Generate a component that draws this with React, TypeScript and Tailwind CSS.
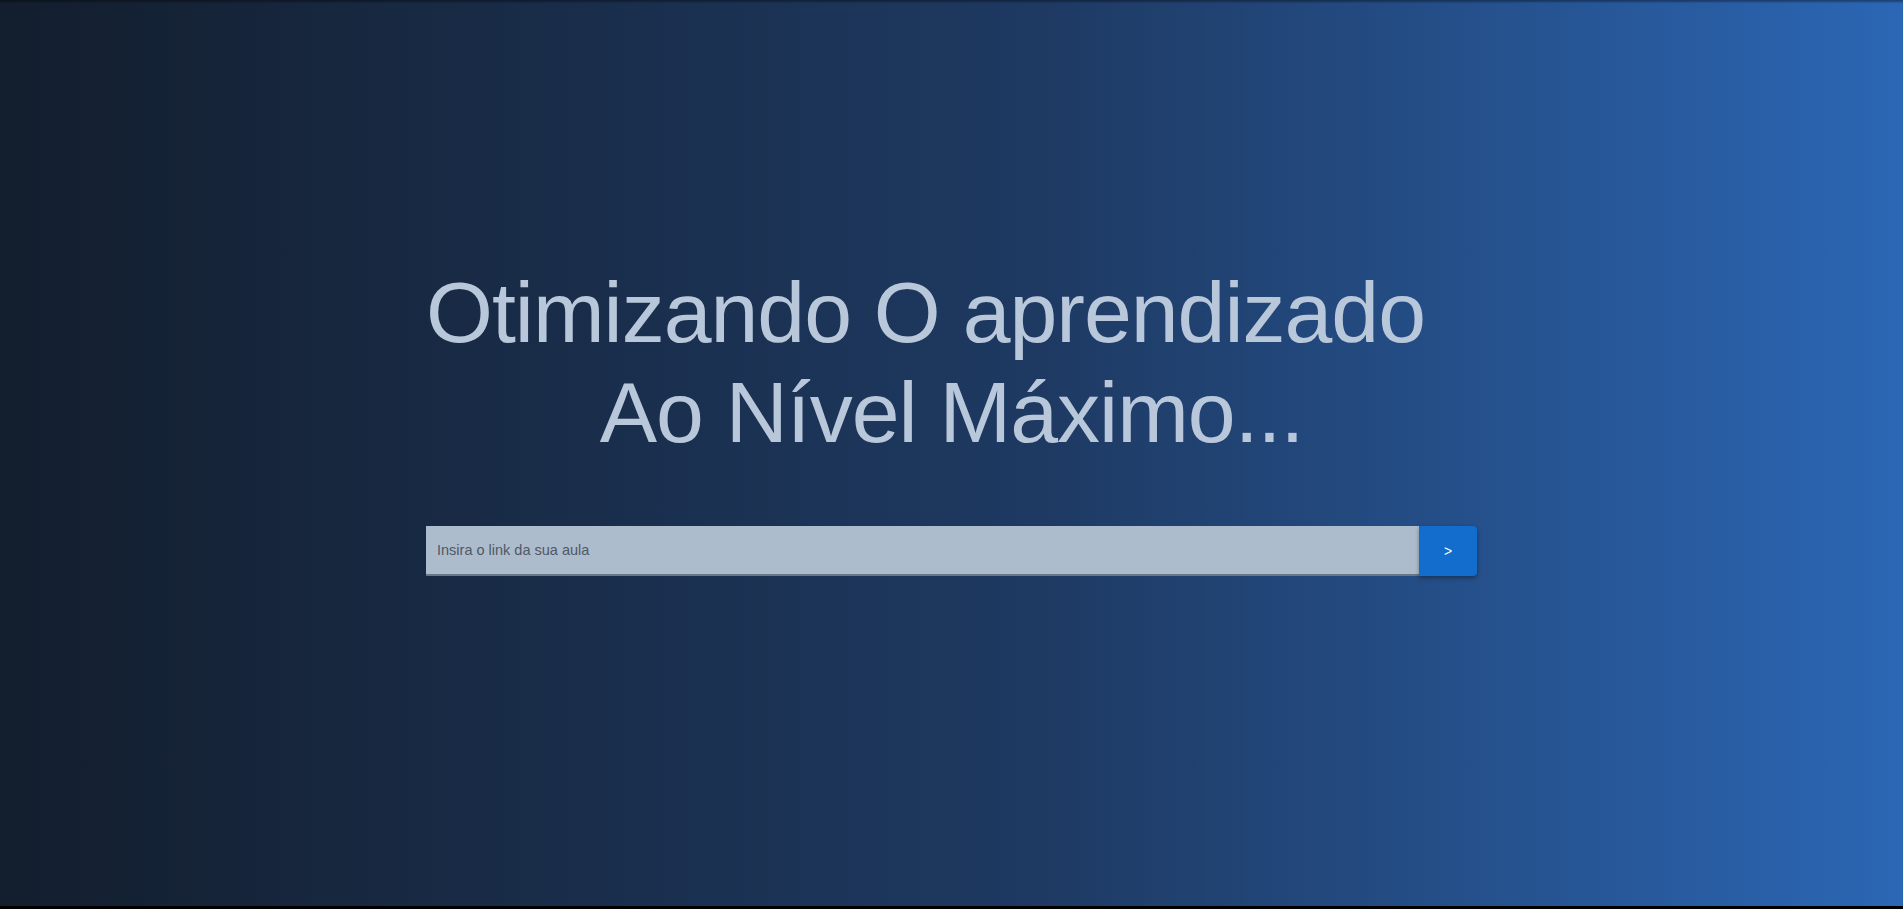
import React from 'react';

const App: React.FC = () => {
  return (
    <div className="h-[909px] bg-black" style={{ fontFamily: '"Liberation Sans", Arial, sans-serif' }}>
      <div className="h-[906px] bg-linear-to-r from-[#131e2e] via-[#1e3a63] via-55% to-[#2b67b5] shadow-[inset_0_3px_2px_-1px_rgba(0,0,0,0.35)] flex flex-col items-center pt-[262px]">
        <div className="w-[1051px] flex flex-col">
          <h1 className="flex flex-col text-[86px] leading-[100px] font-normal text-[#b8c8da] tracking-[-1px]">
            <span className="self-start">Otimizando O aprendizado</span>
            <span className="self-center">Ao Nível Máximo...</span>
          </h1>

          <div className="flex mt-[64px] h-[50px]">
            <input
              type="text"
              placeholder="Insira o link da sua aula"
              className="flex-1 h-full bg-[#adbccc] border-b-2 border-[#6b7684] px-[11px] text-[14.5px] text-[#3d4551] placeholder:text-[#4f5866] outline-none"
            />
            <button className="w-[58px] h-full bg-[#136dcc] text-white text-[14px] rounded-[4px] rounded-l-none shadow-[0_2px_4px_rgba(0,0,0,0.35)]">
              &gt;
            </button>
          </div>
        </div>
      </div>
    </div>
  );
};

export default App;
